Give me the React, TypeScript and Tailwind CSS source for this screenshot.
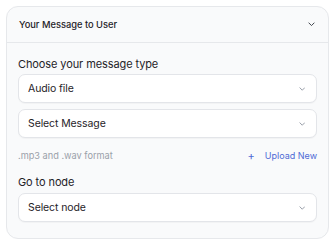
import React from "react";

const Chevron = ({ className = "", w = 8, h = 5 }: { className?: string; w?: number; h?: number }) => (
  <svg width={w} height={h} viewBox="0 0 8 5" fill="none" className={className}>
    <path d="M1 1l3 3 3-3" stroke="currentColor" strokeWidth="1.1" strokeLinecap="round" strokeLinejoin="round" />
  </svg>
);

const Select = ({ label }: { label: string }) => (
  <div className="h-[29px] w-full rounded-[7px] border border-[#e3e5e9] bg-white flex items-center justify-between pl-[9px] pr-[11px] shadow-[0_1px_1px_rgba(0,0,0,0.03)]">
    <span className="text-[10.5px] tracking-[-0.1px] text-[#1f2328]">{label}</span>
    <Chevron className="text-[#8a919c]" w={6.5} h={4} />
  </div>
);

export default function App() {
  return (
    <div className="w-[335px] h-[247px] bg-white pt-[6px] px-[6px]" style={{ fontFamily: "Inter, 'Noto Sans', sans-serif" }}>
      <div className="w-[323px] h-[233px] rounded-[12px] border border-[#e6e8eb] bg-[#f9fafb] flex flex-col">
        <div className="h-[36px] flex items-center justify-between pl-[12px] pr-[13px] border-b border-[#e6e8eb]">
          <span className="text-[9.3px] font-medium text-[#1f2328]">Your Message to User</span>
          <Chevron className="text-[#3a3f47]" w={7} h={4.5} />
        </div>
        <div className="px-[11px] pt-[14px] flex flex-col">
          <div className="text-[11px] tracking-[-0.1px] text-[#1f2328] leading-[15px]">Choose your message type</div>
          <div className="mt-[2px]"><Select label="Audio file" /></div>
          <div className="mt-[6px]"><Select label="Select Message" /></div>
          <div className="mt-[11px] flex items-center justify-between h-[14px]">
            <span className="text-[9.2px] text-[#9aa0a9]">.mp3 and .wav format</span>
            <span className="text-[9px] text-[#4f6bd6] flex items-center gap-[10px]">
              <span className="text-[11px]">+</span>
              <span>Upload New</span>
            </span>
          </div>
          <div className="mt-[12px] text-[11px] tracking-[-0.1px] text-[#1f2328] leading-[15px]">Go to node</div>
          <div className="mt-[3px]"><Select label="Select node" /></div>
        </div>
      </div>
    </div>
  );
}
